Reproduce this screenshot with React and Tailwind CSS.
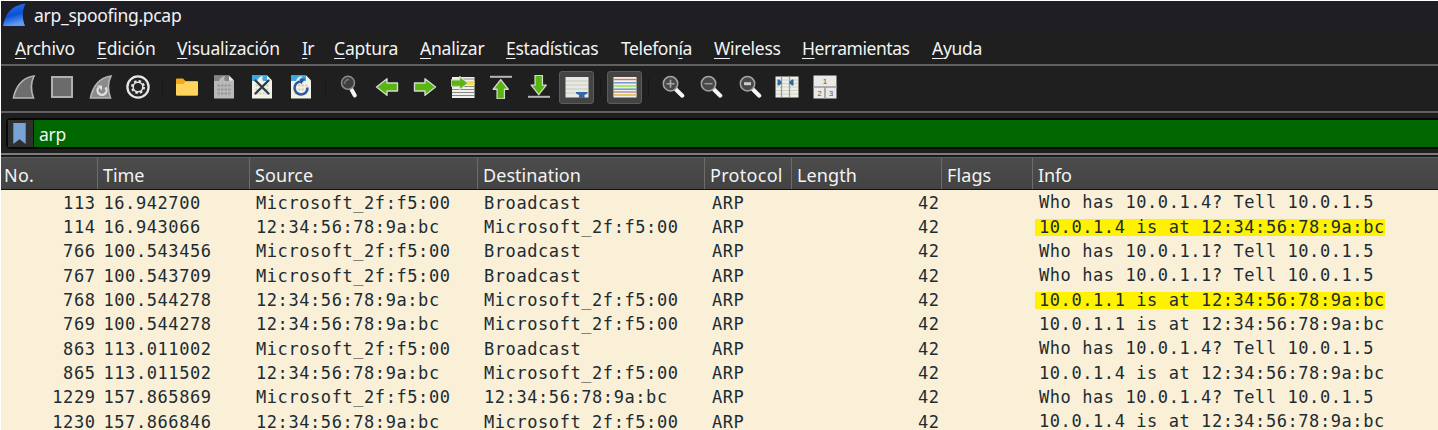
import React from "react";

const MENU = [
  ["A", "rchivo", "w-[82px] tracking-[-0.2px]"],
  ["E", "dición", "w-[80px] tracking-[-0.1px]"],
  ["V", "isualización", "w-[125px] tracking-[-0.2px]"],
  ["I", "r", "w-[32px] tracking-[-0.6px]"],
  ["C", "aptura", "w-[86px] tracking-[-0.2px]"],
  ["A", "nalizar", "w-[86px] tracking-[-0.2px]"],
  ["E", "stadísticas", "w-[115px] tracking-[-0.25px]"],
  ["", "Telefonía", "w-[93px] tracking-[-0.4px]"],
  ["W", "ireless", "w-[88px] tracking-[-0.25px]"],
  ["H", "erramientas", "w-[130px] tracking-[-0.45px]"],
  ["A", "yuda", "w-[60px] tracking-[-0.3px]"],
];

const COLS = [
  ["No.", "w-[96px] pl-[3px] tracking-[0.2px]"],
  ["Time", "w-[152px] pl-[5px]"],
  ["Source", "w-[228px] pl-[5px] tracking-[0.1px]"],
  ["Destination", "w-[227px] pl-[5px] tracking-[0.05px]"],
  ["Protocol", "w-[87px] pl-[5px] tracking-[0.3px]"],
  ["Length", "w-[150px] pl-[5px] tracking-[0.1px]"],
  ["Flags", "w-[91px] pl-[5px] tracking-[0.1px]"],
  ["Info", "flex-1 pl-[5px]"],
];

const MS = "Microsoft_2f:f5:00";
const MAC = "12:34:56:78:9a:bc";
const ROWS = [
  [113, "16.942700", MS, "Broadcast", "Who has 10.0.1.4? Tell 10.0.1.5"],
  [114, "16.943066", MAC, MS, "10.0.1.4 is at 12:34:56:78:9a:bc", true],
  [766, "100.543456", MS, "Broadcast", "Who has 10.0.1.1? Tell 10.0.1.5"],
  [767, "100.543709", MS, "Broadcast", "Who has 10.0.1.1? Tell 10.0.1.5"],
  [768, "100.544278", MAC, MS, "10.0.1.1 is at 12:34:56:78:9a:bc", true],
  [769, "100.544278", MAC, MS, "10.0.1.1 is at 12:34:56:78:9a:bc"],
  [863, "113.011002", MS, "Broadcast", "Who has 10.0.1.4? Tell 10.0.1.5"],
  [865, "113.011502", MAC, MS, "10.0.1.4 is at 12:34:56:78:9a:bc"],
  [1229, "157.865869", MS, MAC, "Who has 10.0.1.4? Tell 10.0.1.5"],
  [1230, "157.866846", MAC, MS, "10.0.1.4 is at 12:34:56:78:9a:bc"],
];

function Icon({ className = "", children }) {
  return (
    <svg viewBox="0 0 24 24" className={"block h-6 w-6 shrink-0 " + className} fill="none">
      {children}
    </svg>
  );
}

const FIN = "M1.5 23C3.5 12 10 2.5 22 1C18.5 8 18.5 15 21.5 23Z";

function Page({ paper, top, ink, children }) {
  return (
    <>
      <path d="M2 0.5H17L22 5.5V23.5H2Z" fill={paper} />
      <path d="M2 0.5H17V6H2Z" fill={top} />
      <path d="M7 6C8 3 10 1.5 13 1C12 3 12 4.500 13 6Z" fill={paper} />
      <path d="M17 0.500V5.500H22Z" fill="#f4f4ee" fillOpacity="0.8" />
      <path d="M5.500 10.500H18.500M5.500 14.500H18.500M5.500 18.500H18.500" stroke={ink} strokeWidth="2.200" strokeDasharray="2.500 1" />
      {children}
    </>
  );
}

const ARROW_R = "M1.500 8H12V3.800L22.500 12L12 20.200V16H1.500Z";

function Arrow({ transform }) {
  return <path d={ARROW_R} transform={transform} fill="#58b512" stroke="#d5dacd" strokeWidth="1.400" strokeLinejoin="round" />;
}

function Lens({ children }) {
  return (
    <>
      <path d="M15 14.500L21.300 20.700" stroke="#f8f8f8" strokeWidth="4" strokeLinecap="round" />
      <circle cx="9.500" cy="8.700" r="7.200" fill="#484848" stroke="#a5a5a5" strokeWidth="1.500" />
      {children}
    </>
  );
}

function Toolbar() {
  return (
    <div className="flex h-[45px] items-center pb-[3px] pl-[11px]">
      <Icon><path d={FIN} fill="#6d6d6d" stroke="#b5b5b5" strokeWidth="1.600" /></Icon>
      <Icon className="ml-[14px]"><path d="M2 2H22V22H2Z" fill="#6b6b6b" stroke="#b0b0b0" strokeWidth="2" /></Icon>
      <Icon className="ml-[15px]">
        <path d={FIN} fill="#8b8b8b" stroke="#b5b5b5" strokeWidth="1.600" />
        <path d="M9.500 12.500A4.500 4.500 0 1 0 16.500 12.500" stroke="#e2e2e2" strokeWidth="2.200" />
        <path d="M8 10.500H13V15.500Z" fill="#e2e2e2" />
      </Icon>
      <Icon className="ml-[13px]">
        <circle cx="12" cy="12" r="10.600" fill="#252525" stroke="#e6e6e6" strokeWidth="2.300" />
        <circle cx="12" cy="12" r="6" stroke="#e6e6e6" strokeWidth="2" strokeDasharray="2.500 2.200" />
        <circle cx="12" cy="12" r="4.800" stroke="#e6e6e6" strokeWidth="1.500" />
      </Icon>
      <div className="ml-3 h-[18px] w-px bg-[#161616]" />
      <Icon className="ml-3">
        <path d="M1 4.500Q1 3.500 2 3.500H8L10.500 6H22Q23 6 23 7V19.500Q23 20.500 22 20.500H2Q1 20.500 1 19.500Z" fill="#f3a91a" />
        <path d="M1 9H8L10.500 6.800H22Q23 6.800 23 7.800V19.500Q23 20.500 22 20.500H2Q1 20.500 1 19.500Z" fill="#ffd35c" />
      </Icon>
      <Icon className="ml-[13px]"><Page paper="#b9b9b9" top="#848484" ink="#969696" /></Icon>
      <Icon className="ml-[14px]">
        <Page paper="#f2f3e6" top="#3ba9e3" ink="#cfd1c5"><path d="M5.500 5.500L18.500 18.500M18.500 5.500L5.500 18.500" stroke="#2f3942" strokeWidth="2.300" strokeLinecap="round" /></Page>
      </Icon>
      <Icon className="ml-[15px]">
        <Page paper="#f2f3e6" top="#3ba9e3" ink="#cfd1c5">
          <path d="M18.500 12.500A6.500 6.500 0 1 1 12 6.500" stroke="#30559b" strokeWidth="2.500" />
          <path d="M10.500 3.500H16.500L12 9.500Z" fill="#30559b" />
        </Page>
      </Icon>
      <div className="ml-3 h-[18px] w-px bg-[#161616]" />
      <Icon className="ml-3">
        <path d="M13.500 14.500L16.800 20.500" stroke="#f5f5f5" strokeWidth="4" strokeLinecap="round" />
        <circle cx="10" cy="7.800" r="6.500" fill="#3d4042" stroke="#8b8b8b" strokeWidth="1.500" />
        <path d="M6.500 9Q7 4.500 11 4.500" stroke="#777" strokeWidth="1.500" />
      </Icon>
      <Icon className="ml-[13px]"><Arrow transform="matrix(-1 0 0 1 24 0)" /></Icon>
      <Icon className="ml-[14px]"><Arrow /></Icon>
      <Icon className="ml-[14px]">
        <path d="M1 2H23.500V23H1Z" fill="#f0f0e9" />
        <path d="M1 11.500H24M1 14.500H24M1 17.500H24M1 20.500H24M12 4H24" stroke="#85898c" strokeWidth="1.100" />
        <path d="M16 6H23.500V10H16Z" fill="#f5df47" />
        <g transform="translate(-1 -1.500) scale(.8)"><Arrow /></g>
      </Icon>
      <Icon className="ml-[14px]">
        <path d="M1 1.800H23" stroke="#b5b8b1" strokeWidth="2" />
        <g transform="translate(.7 3.200) scale(.92)"><Arrow transform="rotate(-90 12 12)" /></g>
      </Icon>
      <Icon className="ml-[14px]">
        <path d="M1 21.800H23" stroke="#b5b8b1" strokeWidth="2" />
        <g transform="translate(.7 -1) scale(.92)"><Arrow transform="rotate(90 12 12)" /></g>
      </Icon>
      <div className="ml-2 flex h-[33px] w-[35px] items-center justify-center rounded-[3px] border border-[#5c5c5c] bg-[#444]">
        <Icon>
          <path d="M.500 2H23.500V22.500H.500Z" fill="#e8e9e0" />
          <path d="M1 6H23M1 10H23M1 14H23M1 18H23" stroke="#c7c9c0" />
          <path d="M11 17H22.500V18.500L19.500 20V23H14V20L11 18.500Z" fill="#3565ab" />
        </Icon>
      </div>
      <div className="ml-[6px] h-[18px] w-px bg-[#161616]" />
      <div className="ml-[6px] flex h-[33px] w-[35px] items-center justify-center rounded-[3px] border border-[#5c5c5c] bg-[#444]">
        <Icon>
          <path d="M.500 2H23.500V22.500H.500Z" fill="#f2f2e9" />
          <path d="M.500 4.500H23.500" stroke="#ed6964" strokeWidth="1.400" />
          <path d="M.500 7.800H23.500" stroke="#729fcf" strokeWidth="1.600" />
          <path d="M.500 11H23.500" stroke="#8ae234" strokeWidth="1.400" />
          <path d="M.500 14.200H23.500" stroke="#729fcf" strokeWidth="1.600" />
          <path d="M.500 17H23.500" stroke="#ad7fa8" strokeWidth="1.300" />
          <path d="M.500 20H23.500" stroke="#e4c864" strokeWidth="2" />
        </Icon>
      </div>
      <div className="ml-[6px] h-[18px] w-px bg-[#161616]" />
      <Icon className="ml-[12px]"><Lens><path d="M5.500 8.700H13.500M9.500 4.700V12.700" stroke="#aaa" strokeWidth="1.600" /></Lens></Icon>
      <Icon className="ml-[14px]"><Lens><path d="M5.500 8.700H13.500" stroke="#999" strokeWidth="1.500" /></Lens></Icon>
      <Icon className="ml-[15px]"><Lens><path d="M6 8.700H13" stroke="#ccc" strokeWidth="3" /></Lens></Icon>
      <Icon className="ml-[13px]">
        <path d="M.500 1.500H23.500V22.500H.500Z" fill="#eeefe6" />
        <path d="M1 5H23M1 8.500H23M1 12H23M1 15.500H23M1 19H23" stroke="#d0d2c8" />
        <path d="M6.500 1.500V22.500M14.500 1.500V22.500" stroke="#9a9e9a" strokeWidth="1.300" />
        <path d="M2.500 4.500H4L6.500 6.500V8.500L4 10.500H2.500ZM18.500 4.500H17L14.500 6.500V8.500L17 10.500H18.500Z" fill="#3465a4" />
      </Icon>
      <Icon className="ml-[14px]">
        <path d="M.500 .500H23.500V23.500H.500Z" fill="#e9e9e7" />
        <path d="M0 12H24M12 12V24" stroke="#9a9a9a" strokeWidth="1.600" />
        <text x="12" y="9" textAnchor="middle" fontSize="8" fontFamily="Liberation Sans, sans-serif" fill="#555">1</text>
        <text x="6.500" y="21" textAnchor="middle" fontSize="7.500" fontFamily="Liberation Sans, sans-serif" fill="#555">2</text>
        <text x="18" y="21" textAnchor="middle" fontSize="7.500" fontFamily="Liberation Sans, sans-serif" fill="#555">3</text>
      </Icon>
    </div>
  );
}

export default function App() {
  return (
    <div className="h-[430px] w-[1438px] overflow-hidden border-t border-l border-white bg-[#1f1f1f] font-['Noto_Sans',sans-serif] text-[17.5px] text-[#f3f3f3]">
      <header className="flex h-[31px] items-start bg-[#201e25] pt-[2px] pl-px">
        <Icon>
          <defs>
            <linearGradient id="fin" x1="0" y1="0" x2="0.300" y2="1">
              <stop offset="0" stopColor="#2d7df5" />
              <stop offset="0.600" stopColor="#0b50d4" />
              <stop offset="1" stopColor="#5d9bf5" />
            </linearGradient>
          </defs>
          <path d="M1 23C3 11 10 2 23.500 .500C20 8 20 15 23 23Z" fill="url(#fin)" />
        </Icon>
        <span className="ml-2 leading-6 tracking-[-0.3px]">arp_spoofing.pcap</span>
      </header>
      <nav className="flex h-8 items-center pl-[14px] leading-6">
        {MENU.map(([key, rest, width]) => (
          <span key={key + rest} className={"shrink-0 whitespace-nowrap " + width}>
            {key && <span className="underline decoration-1 underline-offset-[3px]">{key}</span>}
            {rest === "Telefonía" ? <>Telefon<span className="underline decoration-1 underline-offset-[3px]">í</span>a</> : rest}
          </span>
        ))}
      </nav>
      <div className="h-0.5 bg-[#606060]" />
      <Toolbar />
      <div className="h-0.5 bg-[#606060]" />
      <div className="h-[40px] pt-[5px] pl-[5px]">
        <div className="flex h-[31px] rounded-l-[5px] border-2 border-r-0 border-[#080808] bg-[#006600]">
          <div className="flex w-[26px] items-center justify-center border-r border-[#111] bg-[#303030]">
            <svg viewBox="0 0 13 22" className="-ml-0.5 h-[21px] w-[13px]"><path d="M0 0H13V22L6.500 17L0 22Z" fill="#77a3d5" /></svg>
          </div>
          <span className="ml-[5px] pt-px leading-[27px] tracking-[-0.3px]">arp</span>
        </div>
      </div>
      <div className="h-0.5 bg-[#7c7c7c]" />
      <div className="h-0.5 bg-[#1b1b1b]" />
      <div className="flex h-[33px] border-t border-b border-t-[#5e5e5e] border-b-[#111] bg-linear-to-b from-[#4c4c4c] to-[#434343] text-[18px] tracking-[-0.1px]">
        {COLS.map(([name, cls], i) => (
          <div key={name} className={"flex shrink-0 items-center pt-[3px] " + (i ? "border-l border-[#6c6c6c] " : "") + cls}>{name}</div>
        ))}
      </div>
      <div className="bg-[#faefd7] pt-[0.6px] font-['DejaVu_Sans_Mono',monospace] text-[17px] tracking-[0.57px] text-[#1b2c33]">
        {ROWS.map(([no, time, src, dst, info, marked]) => (
          <div key={no} className="flex h-[24.33px] items-center whitespace-pre leading-6">
            <span className="w-[94.500px] text-right">{no}</span>
            <span className="w-[160.500px] pl-2">{time}</span>
            <span className="w-[228px]">{src}</span>
            <span className="w-[228px]">{dst}</span>
            <span className="w-[80px]">ARP</span>
            <span className="w-[147.500px] text-right">42</span>
            <span className="ml-[95.500px]">
              <span className={"block pl-1 leading-[17px] " + (marked ? "bg-[#fff200]" : "")}>{info}</span>
            </span>
          </div>
        ))}
      </div>
    </div>
  );
}
